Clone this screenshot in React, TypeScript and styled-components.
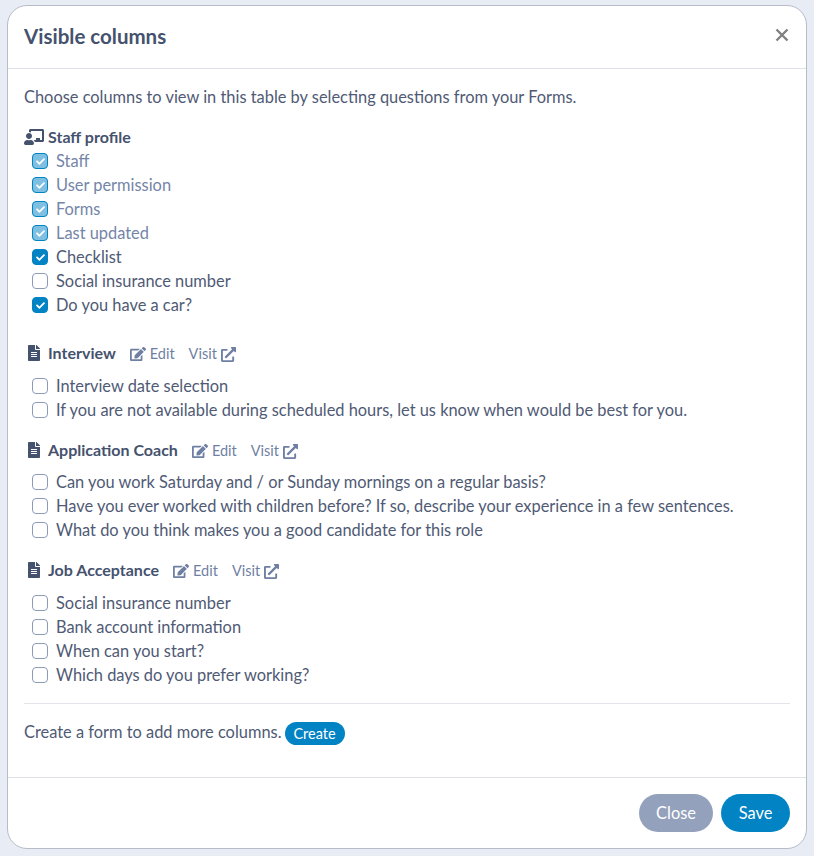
import React from 'react';
import styled, { createGlobalStyle } from 'styled-components';
import { FaChalkboardTeacher, FaCheck, FaEdit, FaExternalLinkAlt, FaFileAlt } from 'react-icons/fa';

const GlobalStyle = createGlobalStyle`
  html, body {
    margin: 0;
    height: 100%;
    background: #e8ecf5;
  }
  body {
    font-family: Lato, 'Noto Sans', sans-serif;
  }
`;

const Page = styled.div`
  width: 814px;
  height: 856px;
  box-sizing: border-box;
  padding: 5px 7px 6px;
`;

const Modal = styled.div`
  box-sizing: border-box;
  width: 800px;
  height: 844px;
  display: flex;
  flex-direction: column;
  background: #ffffff;
  border: 1px solid #b8bcc8;
  border-radius: 20px;
`;

const Header = styled.header`
  box-sizing: border-box;
  height: 63px;
  flex: none;
  display: flex;
  align-items: center;
  justify-content: space-between;
  padding: 0 17px 3px 16px;
  border-bottom: 1px solid #dee2e6;
`;

const Title = styled.h5`
  margin: 0;
  font-size: 20.5px;
  font-weight: 700;
  color: #45526e;
`;

const CloseIcon = styled.button`
  display: flex;
  margin-top: -1px;
  padding: 0;
  border: 0;
  background: none;
  color: #808080;
`;

const Body = styled.div`
  flex: 1;
  padding: 16px;
  color: #4f5a75;
  font-size: 16.4px;
  line-height: 24px;
`;

const Intro = styled.p`
  margin: 0 0 16px;
`;

const Section = styled.section<{ $gap: number }>`
  margin-top: ${(p) => p.$gap}px;
`;

const SectionHead = styled.div<{ $below: number }>`
  height: 24px;
  display: flex;
  align-items: center;
  margin-bottom: ${(p) => p.$below}px;
`;

const IconSlot = styled.span<{ $inset: number }>`
  box-sizing: border-box;
  width: 24px;
  flex: none;
  display: flex;
  padding-left: ${(p) => p.$inset}px;
  color: #45526e;
`;

const SectionName = styled.strong`
  font-size: 16px;
  font-weight: 700;
  color: #45526e;
`;

const HeadLink = styled.a`
  display: inline-flex;
  align-items: center;
  gap: 4px;
  margin: 2px 0 0 14px;
  font-size: 14.5px;
  color: #6f7fa3;
  svg {
    font-size: 15px;
  }
`;

const EditIcon = styled(FaEdit)`
  && {
    font-size: 16px;
  }
`;

const Row = styled.label<{ $locked?: boolean }>`
  box-sizing: border-box;
  height: 24px;
  display: flex;
  align-items: center;
  gap: 8px;
  padding: 0 0 1px 8px;
  color: ${(p) => (p.$locked ? '#7485a8' : '#4f5a75')};
`;

const Box = styled.span<{ $state: 'off' | 'on' | 'locked' }>`
  box-sizing: border-box;
  width: 16px;
  height: 16px;
  margin-top: 1px;
  flex: none;
  display: flex;
  align-items: center;
  justify-content: center;
  border-radius: 4px;
  color: #ffffff;
  font-size: 9px;
  border: 1px solid ${(p) => (p.$state === 'off' ? '#8e9bb8' : '#0283c4')};
  background: ${(p) => (p.$state === 'off' ? '#ffffff' : p.$state === 'on' ? '#0283c4' : '#7fbfe1')};
`;

const Divider = styled.hr`
  margin: 16px 0;
  border: 0;
  border-top: 1px solid #e3e5ea;
`;

const CreateLine = styled.div`
  display: flex;
  align-items: flex-start;
  gap: 3px;
`;

const CreateButton = styled.button`
  width: 60px;
  height: 23px;
  padding: 0;
  border: 0;
  border-radius: 12px;
  background: #0283c4;
  color: #ffffff;
  font-family: inherit;
  font-size: 14.5px;
  margin-top: 2px;
`;

const Footer = styled.footer`
  box-sizing: border-box;
  height: 71px;
  flex: none;
  display: flex;
  align-items: center;
  justify-content: flex-end;
  gap: 8px;
  padding: 0 16px;
  border-top: 1px solid #dee2e6;
`;

const FooterButton = styled.button<{ $primary?: boolean }>`
  height: 38px;
  width: ${(p) => (p.$primary ? 69 : 74)}px;
  padding: 0 0 2px;
  border: 0;
  border-radius: 19px;
  background: ${(p) => (p.$primary ? '#0283c4' : '#94a1bc')};
  color: #ffffff;
  font-family: inherit;
  font-size: 16.4px;
`;

type Item = { label: string; state?: 'off' | 'on' | 'locked' };

const Check = ({ label, state = 'off' }: Item) => (
  <Row $locked={state === 'locked'}>
    <Box $state={state}>{state !== 'off' && <FaCheck />}</Box>
    {label}
  </Row>
);

const profile: Item[] = [
  { label: 'Staff', state: 'locked' },
  { label: 'User permission', state: 'locked' },
  { label: 'Forms', state: 'locked' },
  { label: 'Last updated', state: 'locked' },
  { label: 'Checklist', state: 'on' },
  { label: 'Social insurance number' },
  { label: 'Do you have a car?', state: 'on' },
];

const forms = [
  {
    name: 'Interview',
    gap: 24,
    below: 9,
    items: ['Interview date selection', 'If you are not available during scheduled hours, let us know when would be best for you.'],
  },
  {
    name: 'Application Coach',
    gap: 16,
    below: 8,
    items: [
      'Can you work Saturday and / or Sunday mornings on a regular basis?',
      'Have you ever worked with children before? If so, describe your experience in a few sentences.',
      'What do you think makes you a good candidate for this role',
    ],
  },
  {
    name: 'Job Acceptance',
    gap: 16,
    below: 9,
    items: ['Social insurance number', 'Bank account information', 'When can you start?', 'Which days do you prefer working?'],
  },
];

export default function App() {
  return (
    <Page>
      <GlobalStyle />
      <Modal>
        <Header>
          <Title>Visible columns</Title>
          <CloseIcon aria-label="Close">
            <svg width="14" height="14" viewBox="0 0 14 14">
              <path d="M1.5 1.5 12.5 12.5M12.5 1.5 1.5 12.5" stroke="currentColor" strokeWidth="2.4" />
            </svg>
          </CloseIcon>
        </Header>
        <Body>
          <Intro>Choose columns to view in this table by selecting questions from your Forms.</Intro>
          <Section $gap={0}>
            <SectionHead $below={0}>
              <IconSlot $inset={0}>
                <FaChalkboardTeacher size={20} />
              </IconSlot>
              <SectionName>Staff profile</SectionName>
            </SectionHead>
            {profile.map((item) => (
              <Check key={item.label} {...item} />
            ))}
          </Section>
          {forms.map((form) => (
            <Section key={form.name} $gap={form.gap}>
              <SectionHead $below={form.below}>
                <IconSlot $inset={2}>
                  <FaFileAlt size={16} />
                </IconSlot>
                <SectionName>{form.name}</SectionName>
                <HeadLink>
                  <EditIcon />
                  Edit
                </HeadLink>
                <HeadLink>
                  Visit
                  <FaExternalLinkAlt />
                </HeadLink>
              </SectionHead>
              {form.items.map((label) => (
                <Check key={label} label={label} />
              ))}
            </Section>
          ))}
          <Divider />
          <CreateLine>
            Create a form to add more columns.
            <CreateButton>Create</CreateButton>
          </CreateLine>
        </Body>
        <Footer>
          <FooterButton>Close</FooterButton>
          <FooterButton $primary>Save</FooterButton>
        </Footer>
      </Modal>
    </Page>
  );
}
